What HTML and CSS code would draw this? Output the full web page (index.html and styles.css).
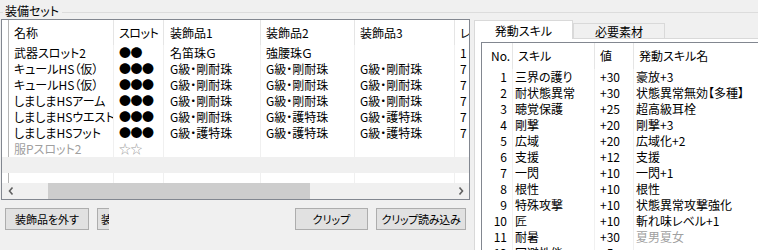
FILE: index.html
```html
<!DOCTYPE html>
<html lang="ja">
<head>
    <meta charset="UTF-8">
    <title>装備セット</title>
    <link rel="stylesheet" href="styles.css">
</head>
<body>
    <div class="legend">
        <span class="legend-edge"></span>
        <span class="legend-text">装備セット</span>
        <span class="legend-line"></span>
    </div>
    <div class="main">
        <div class="left">
            <div class="lv sets">
                <div class="head">
                    <div class="c c0"></div>
                    <div class="c c1">名称</div>
                    <div class="c c2">スロット</div>
                    <div class="c c3">装飾品1</div>
                    <div class="c c4">装飾品2</div>
                    <div class="c c5">装飾品3</div>
                    <div class="c c6">レア</div>
                </div>
                <div class="row">
                    <div class="c c0"></div><div class="c c1">武器スロット2</div><div class="c c2">●●</div>
                    <div class="c c3">名笛珠Ｇ</div><div class="c c4">強腰珠Ｇ</div><div class="c c5"></div><div class="c c6">1</div>
                </div>
                <div class="row">
                    <div class="c c0"></div><div class="c c1">キュールHS（仮）</div><div class="c c2">●●●</div>
                    <div class="c c3">G級・剛耐珠</div><div class="c c4">G級・剛耐珠</div><div class="c c5">G級・剛耐珠</div><div class="c c6">7</div>
                </div>
                <div class="row">
                    <div class="c c0"></div><div class="c c1">キュールHS（仮）</div><div class="c c2">●●●</div>
                    <div class="c c3">G級・剛耐珠</div><div class="c c4">G級・剛耐珠</div><div class="c c5">G級・剛耐珠</div><div class="c c6">7</div>
                </div>
                <div class="row">
                    <div class="c c0"></div><div class="c c1">しましまHSアーム</div><div class="c c2">●●●</div>
                    <div class="c c3">G級・剛耐珠</div><div class="c c4">G級・剛耐珠</div><div class="c c5">G級・剛耐珠</div><div class="c c6">7</div>
                </div>
                <div class="row">
                    <div class="c c0"></div><div class="c c1">しましまHSウエスト</div><div class="c c2">●●●</div>
                    <div class="c c3">G級・剛耐珠</div><div class="c c4">G級・護特珠</div><div class="c c5">G級・護特珠</div><div class="c c6">7</div>
                </div>
                <div class="row">
                    <div class="c c0"></div><div class="c c1">しましまHSフット</div><div class="c c2">●●●</div>
                    <div class="c c3">G級・護特珠</div><div class="c c4">G級・護特珠</div><div class="c c5">G級・護特珠</div><div class="c c6">7</div>
                </div>
                <div class="row dim">
                    <div class="c c0"></div><div class="c c1">服Pスロット2</div><div class="c c2">☆☆</div>
                    <div class="c c3"></div><div class="c c4"></div><div class="c c5"></div><div class="c c6"></div>
                </div>
                <div class="band"></div>
                <div class="row filler">
                    <div class="c c0"></div><div class="c c1"></div><div class="c c2"></div>
                    <div class="c c3"></div><div class="c c4"></div><div class="c c5"></div><div class="c c6"></div>
                </div>
                <div class="hscroll">
                    <div class="sb-btn">
                        <svg width="6" height="8" viewBox="0 0 6 8"><polyline points="4.5,0.5 1.5,4 4.5,7.5" fill="none" stroke="#606060" stroke-width="1.6"/></svg>
                    </div>
                    <div class="track"><div class="thumb"></div></div>
                    <div class="sb-btn">
                        <svg width="6" height="8" viewBox="0 0 6 8"><polyline points="1.5,0.5 4.5,4 1.5,7.5" fill="none" stroke="#606060" stroke-width="1.6"/></svg>
                    </div>
                </div>
            </div>
            <div class="buttons">
                <button class="btn btn-remove">装飾品を外す</button>
                <div class="btn-clip"><button class="btn btn-hidden">装飾品を付ける</button></div>
                <div class="btn-group">
                    <button class="btn btn-copy">クリップ</button>
                    <button class="btn btn-load">クリップ読み込み</button>
                </div>
            </div>
        </div>

        <div class="right">
            <div class="tabs">
                <div class="tab active">発動スキル</div>
                <div class="tab">必要素材</div>
            </div>
            <div class="tab-panel">
                <div class="lv skills">
                    <div class="head">
                        <div class="c k1">No.</div>
                        <div class="c k2">スキル</div>
                        <div class="c k3">値</div>
                        <div class="c k4">発動スキル名</div>
                    </div>
                    <div class="row"><div class="c k1">1</div><div class="c k2">三界の護り</div><div class="c k3">+30</div><div class="c k4">豪放+3</div></div>
                    <div class="row"><div class="c k1">2</div><div class="c k2">耐状態異常</div><div class="c k3">+30</div><div class="c k4">状態異常無効【多種】</div></div>
                    <div class="row"><div class="c k1">3</div><div class="c k2">聴覚保護</div><div class="c k3">+25</div><div class="c k4">超高級耳栓</div></div>
                    <div class="row"><div class="c k1">4</div><div class="c k2">剛撃</div><div class="c k3">+20</div><div class="c k4">剛撃+3</div></div>
                    <div class="row"><div class="c k1">5</div><div class="c k2">広域</div><div class="c k3">+20</div><div class="c k4">広域化+2</div></div>
                    <div class="row"><div class="c k1">6</div><div class="c k2">支援</div><div class="c k3">+12</div><div class="c k4">支援</div></div>
                    <div class="row"><div class="c k1">7</div><div class="c k2">一閃</div><div class="c k3">+10</div><div class="c k4">一閃+1</div></div>
                    <div class="row"><div class="c k1">8</div><div class="c k2">根性</div><div class="c k3">+10</div><div class="c k4">根性</div></div>
                    <div class="row"><div class="c k1">9</div><div class="c k2">特殊攻撃</div><div class="c k3">+10</div><div class="c k4">状態異常攻撃強化</div></div>
                    <div class="row"><div class="c k1">10</div><div class="c k2">匠</div><div class="c k3">+10</div><div class="c k4">斬れ味レベル+1</div></div>
                    <div class="row"><div class="c k1">11</div><div class="c k2">耐暑</div><div class="c k3">+30</div><div class="c k4 dim">夏男夏女</div></div>
                    <div class="row"><div class="c k1">12</div><div class="c k2">回避性能</div><div class="c k3">+5</div><div class="c k4"></div></div>
                </div>
            </div>
        </div>
    </div>
</body>
</html>
```

FILE: styles.css
```css
body {
    margin: 0;
    width: 758px;
    height: 250px;
    overflow: hidden;
    background-color: #f0f0f0;
    color: #000;
    font-family: "Noto Sans CJK JP", sans-serif;
    font-size: 12px;
    font-feature-settings: "palt";
}

/* group box title */
.legend {
    display: flex;
    align-items: flex-start;
    height: 19px;
}

.legend-edge {
    width: 3px;
    margin-top: 12px;
    border-top: 1px solid #dcdcdc;
}

.legend-text {
    margin: 3px 3px 0 2px;
    line-height: 16px;
}

.legend-line {
    flex: 1;
    margin-top: 12px;
    border-top: 1px solid #dcdcdc;
}

.main {
    display: flex;
}

.left {
    width: 469px;
    margin-left: 1px;
}

/* list views */
.lv {
    background-color: #fff;
    border: 1px solid #828790;
    overflow: hidden;
}

.head,
.row {
    display: flex;
    white-space: nowrap;
}

.head {
    height: 25px;
    line-height: 25px;
}

.row {
    height: 16px;
    line-height: 16px;
}

.c {
    flex: none;
    box-sizing: border-box;
    overflow: hidden;
    padding-left: 5px;
}

.head .c {
    border-right: 1px solid #e5e5e5;
}

.row .c {
    border-right: 1px solid #f0f0f0;
}

.sets .c0 {
    width: 7px;
    padding: 0;
    border-right: 1px solid #b4b4b4;
}

.sets .c1 { width: 105px; }
.sets .c2 { width: 50px; letter-spacing: -0.5px; }
.sets .c3 { width: 97px; padding-left: 6px; }
.sets .c4 { width: 94px; }
.sets .c5 { width: 100px; }
.sets .c6 { width: 40px; }

.row.dim,
.c.dim {
    color: #a0a0a0;
}

.band {
    height: 16px;
    background-color: #f0f0f0;
}

.row.filler {
    height: 10px;
}

.hscroll {
    display: flex;
    height: 16px;
    background-color: #f0f0f0;
}

.sb-btn {
    width: 17px;
    display: flex;
    align-items: center;
    justify-content: center;
}

.track {
    flex: 1;
    padding-left: 29px;
}

.thumb {
    width: 262px;
    height: 16px;
    background-color: #cdcdcd;
}

/* buttons */
.buttons {
    display: flex;
    margin-top: 8px;
    padding: 0 4px;
}

.btn {
    height: 22px;
    padding: 0;
    background-color: #e1e1e1;
    border: 1px solid #adadad;
    font-family: inherit;
    font-size: 11px;
    font-feature-settings: "palt";
    color: #000;
    white-space: nowrap;
}

.btn-remove {
    width: 84px;
}

.btn-clip {
    width: 12px;
    margin-left: 8px;
    overflow: hidden;
}

.btn-hidden {
    width: 90px;
    text-align: left;
    padding-left: 3px;
}

.btn-group {
    display: flex;
    gap: 8px;
    margin-left: auto;
}

.btn-copy {
    width: 73px;
}

.btn-load {
    width: 90px;
    letter-spacing: -0.3px;
}

/* tab control */
.right {
    flex: 1;
    min-width: 0;
    margin-left: 4px;
    margin-top: 1px;
}

.tabs {
    display: flex;
    align-items: flex-end;
    height: 18px;
}

.tab {
    box-sizing: border-box;
    height: 15px;
    border: 1px solid #d9d9d9;
    border-bottom: none;
    background-color: #f0f0f0;
    text-align: center;
    line-height: 16px;
    width: 92px;
}

.tab.active {
    position: relative;
    z-index: 1;
    width: 99px;
    height: 19px;
    margin-bottom: -1px;
    background-color: #fff;
    line-height: 20px;
}

.tab-panel {
    height: 240px;
    background-color: #fff;
    border-top: 1px solid #d9d9d9;
    border-left: 1px solid #d9d9d9;
    padding: 3px 0 0 6px;
}

.skills {
    width: 320px;
    border-right: none;
}

.skills .head {
    height: 26px;
    line-height: 26px;
}

.skills .k1 {
    width: 31px;
    text-align: right;
    padding: 0 5px 0 0;
}

.skills .head .k1 {
    text-align: left;
    padding: 0 0 0 9px;
}

.skills .k2 { width: 82px; padding-left: 2px; }
.skills .k3 { width: 39px; }
.skills .k4 { width: 160px; padding-left: 2px; }

.skills .head .k2,
.skills .head .k4 {
    padding-left: 5px;
}
```
